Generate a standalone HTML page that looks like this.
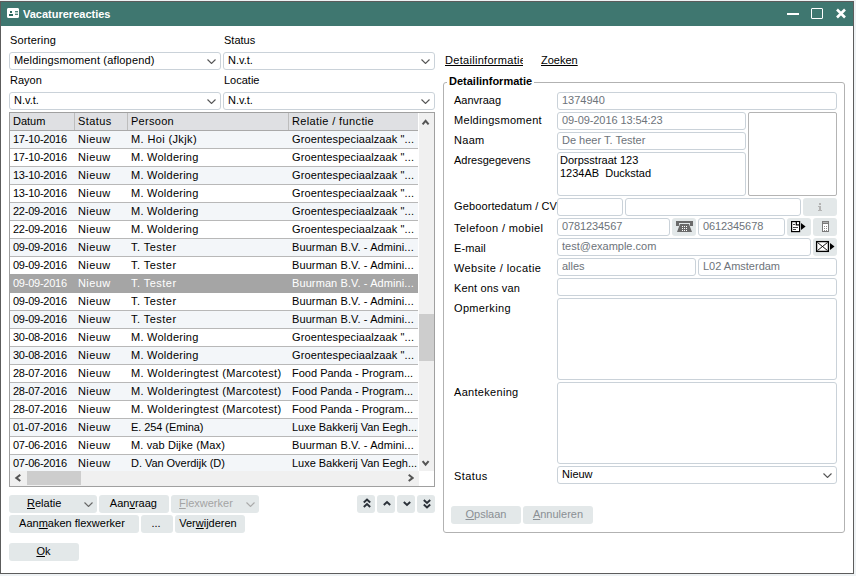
<!DOCTYPE html><html><head><meta charset="utf-8"><style>
*{margin:0;padding:0;box-sizing:border-box}
html,body{width:856px;height:576px;overflow:hidden;background:#eef2f4;font-family:"Liberation Sans",sans-serif;font-size:11px;color:#000}
div{position:absolute}
svg{position:absolute;shape-rendering:geometricPrecision}
.t{white-space:nowrap;line-height:13px;font-size:11px}
.fld{border:1px solid #cad2d9;border-radius:3px;background:#fff}
.btn{background:#e3e8e9;border-radius:3px}
.u{text-decoration:underline}
.lb{letter-spacing:0.3px}
</style></head><body>

<div class="" style="left:0px;top:1px;width:854px;height:573px;border:1px solid #5c5c5c;background:#fff"></div>
<div class="" style="left:1px;top:2px;width:852px;height:24px;background:#3f7770"></div>
<svg style="left:7px;top:8px" width="12" height="10" viewBox="0 0 12 10" shape-rendering="crispEdges">
<rect x="0" y="0" width="12" height="10" fill="#fff"/>
<rect x="0" y="0" width="1" height="1" fill="#a9c4bf"/><rect x="11" y="0" width="1" height="1" fill="#a9c4bf"/>
<rect x="0" y="9" width="1" height="1" fill="#a9c4bf"/><rect x="11" y="9" width="1" height="1" fill="#a9c4bf"/>
<rect x="3" y="3" width="2" height="2" fill="#2f6a60"/>
<rect x="2" y="6" width="4" height="2" fill="#2f6a60"/>
<rect x="8" y="3" width="3" height="1" fill="#4f847c"/>
<rect x="8" y="4" width="3" height="2" fill="#b9d0cb"/>
<rect x="8" y="6" width="3" height="1" fill="#4f847c"/>
</svg>
<div class="t" style="left:23px;top:8px;color:#fff;font-weight:bold">Vacaturereacties</div>
<div class="" style="left:787px;top:13px;width:12px;height:2px;background:#fff"></div>
<div class="" style="left:811px;top:8px;width:12px;height:11px;border:1.5px solid #fff;border-radius:1px"></div>
<svg style="left:835px;top:8px" width="12" height="12" viewBox="0 0 12 12"><path d="M2 1.5 L10 9.5 M10 1.5 L2 9.5" stroke="#fff" stroke-width="2.6"/></svg>
<div class="t" style="left:10px;top:34px;letter-spacing:0.15px">Sortering</div>
<div class="fld" style="left:9px;top:52px;width:212px;height:18px;"><div class="t" style="left:4px;top:1px;color:#000"><span style="letter-spacing:0.17px">Meldingsmoment (aflopend)</span></div></div>
<svg style="position:absolute;left:207px;top:59px" width="9" height="5" viewBox="0 0 9 5"><path d="M0.5 0.5 L4.5 4.5 L8.5 0.5" fill="none" stroke="#555" stroke-width="1.1"/></svg>
<div class="t" style="left:224px;top:34px;">Status</div>
<div class="fld" style="left:223px;top:52px;width:212px;height:18px;"><div class="t" style="left:4px;top:1px;color:#000">N.v.t.</div></div>
<svg style="position:absolute;left:421px;top:59px" width="9" height="5" viewBox="0 0 9 5"><path d="M0.5 0.5 L4.5 4.5 L8.5 0.5" fill="none" stroke="#555" stroke-width="1.1"/></svg>
<div class="t" style="left:10px;top:74px;">Rayon</div>
<div class="fld" style="left:9px;top:92px;width:212px;height:18px;"><div class="t" style="left:4px;top:1px;color:#000">N.v.t.</div></div>
<svg style="position:absolute;left:207px;top:99px" width="9" height="5" viewBox="0 0 9 5"><path d="M0.5 0.5 L4.5 4.5 L8.5 0.5" fill="none" stroke="#555" stroke-width="1.1"/></svg>
<div class="t" style="left:224px;top:74px;">Locatie</div>
<div class="fld" style="left:223px;top:92px;width:212px;height:18px;"><div class="t" style="left:4px;top:1px;color:#000">N.v.t.</div></div>
<svg style="position:absolute;left:421px;top:99px" width="9" height="5" viewBox="0 0 9 5"><path d="M0.5 0.5 L4.5 4.5 L8.5 0.5" fill="none" stroke="#555" stroke-width="1.1"/></svg>
<div class="" style="left:9px;top:112px;width:426px;height:375px;border:1px solid #a0a0a0;background:#fff"></div>
<div class="" style="left:10px;top:113px;width:408px;height:17px;background:#dfe0e3"></div>
<div class="" style="left:10px;top:130px;width:408px;height:1px;background:#a9a9a9"></div>
<div class="" style="left:74px;top:113px;width:1px;height:17px;background:#bdbdbd"></div>
<div class="" style="left:127px;top:113px;width:1px;height:17px;background:#bdbdbd"></div>
<div class="" style="left:288px;top:113px;width:1px;height:17px;background:#bdbdbd"></div>
<div class="t" style="left:13px;top:115px;">Datum</div>
<div class="t" style="left:78px;top:115px;letter-spacing:0.4px">Status</div>
<div class="t" style="left:131px;top:115px;letter-spacing:0.28px">Persoon</div>
<div class="t" style="left:292px;top:115px;letter-spacing:0.37px">Relatie / functie</div>
<div style="left:10px;top:131px;width:408px;height:340px;overflow:hidden"><div style="left:0;top:0px;width:408px;height:17px;background:#f3f6f9;color:#000"><div class="t" style="left:3px;top:2px;letter-spacing:-0.25px">17-10-2016</div><div class="t" style="left:68px;top:2px;letter-spacing:0.4px">Nieuw</div><div class="t" style="left:121px;top:2px;letter-spacing:0.37px">M. Hoi (Jkjk)</div><div class="t" style="left:282px;top:2px;letter-spacing:0.11px">Groentespeciaalzaak "...</div></div><div style="left:0;top:17px;width:408px;height:1px;background:#b8b8b8"></div><div style="left:0;top:18px;width:408px;height:17px;background:#fff;color:#000"><div class="t" style="left:3px;top:2px;letter-spacing:-0.25px">17-10-2016</div><div class="t" style="left:68px;top:2px;letter-spacing:0.4px">Nieuw</div><div class="t" style="left:121px;top:2px;letter-spacing:0.25px">M. Woldering</div><div class="t" style="left:282px;top:2px;letter-spacing:0.11px">Groentespeciaalzaak "...</div></div><div style="left:0;top:35px;width:408px;height:1px;background:#b8b8b8"></div><div style="left:0;top:36px;width:408px;height:17px;background:#f3f6f9;color:#000"><div class="t" style="left:3px;top:2px;letter-spacing:-0.25px">13-10-2016</div><div class="t" style="left:68px;top:2px;letter-spacing:0.4px">Nieuw</div><div class="t" style="left:121px;top:2px;letter-spacing:0.25px">M. Woldering</div><div class="t" style="left:282px;top:2px;letter-spacing:0.11px">Groentespeciaalzaak "...</div></div><div style="left:0;top:53px;width:408px;height:1px;background:#b8b8b8"></div><div style="left:0;top:54px;width:408px;height:17px;background:#fff;color:#000"><div class="t" style="left:3px;top:2px;letter-spacing:-0.25px">13-10-2016</div><div class="t" style="left:68px;top:2px;letter-spacing:0.4px">Nieuw</div><div class="t" style="left:121px;top:2px;letter-spacing:0.25px">M. Woldering</div><div class="t" style="left:282px;top:2px;letter-spacing:0.11px">Groentespeciaalzaak "...</div></div><div style="left:0;top:71px;width:408px;height:1px;background:#b8b8b8"></div><div style="left:0;top:72px;width:408px;height:17px;background:#f3f6f9;color:#000"><div class="t" style="left:3px;top:2px;letter-spacing:-0.25px">22-09-2016</div><div class="t" style="left:68px;top:2px;letter-spacing:0.4px">Nieuw</div><div class="t" style="left:121px;top:2px;letter-spacing:0.25px">M. Woldering</div><div class="t" style="left:282px;top:2px;letter-spacing:0.11px">Groentespeciaalzaak "...</div></div><div style="left:0;top:89px;width:408px;height:1px;background:#b8b8b8"></div><div style="left:0;top:90px;width:408px;height:17px;background:#fff;color:#000"><div class="t" style="left:3px;top:2px;letter-spacing:-0.25px">22-09-2016</div><div class="t" style="left:68px;top:2px;letter-spacing:0.4px">Nieuw</div><div class="t" style="left:121px;top:2px;letter-spacing:0.25px">M. Woldering</div><div class="t" style="left:282px;top:2px;letter-spacing:0.11px">Groentespeciaalzaak "...</div></div><div style="left:0;top:107px;width:408px;height:1px;background:#b8b8b8"></div><div style="left:0;top:108px;width:408px;height:17px;background:#f3f6f9;color:#000"><div class="t" style="left:3px;top:2px;letter-spacing:-0.25px">09-09-2016</div><div class="t" style="left:68px;top:2px;letter-spacing:0.4px">Nieuw</div><div class="t" style="left:121px;top:2px;letter-spacing:0.46px">T. Tester</div><div class="t" style="left:282px;top:2px;letter-spacing:0.1px">Buurman B.V. - Admini...</div></div><div style="left:0;top:125px;width:408px;height:1px;background:#b8b8b8"></div><div style="left:0;top:126px;width:408px;height:17px;background:#fff;color:#000"><div class="t" style="left:3px;top:2px;letter-spacing:-0.25px">09-09-2016</div><div class="t" style="left:68px;top:2px;letter-spacing:0.4px">Nieuw</div><div class="t" style="left:121px;top:2px;letter-spacing:0.46px">T. Tester</div><div class="t" style="left:282px;top:2px;letter-spacing:0.1px">Buurman B.V. - Admini...</div></div><div style="left:0;top:143px;width:408px;height:1px;background:#a5a5a5"></div><div style="left:0;top:144px;width:408px;height:17px;background:#a5a5a5;color:#fff"><div class="t" style="left:3px;top:2px;letter-spacing:-0.25px">09-09-2016</div><div class="t" style="left:68px;top:2px;letter-spacing:0.4px">Nieuw</div><div class="t" style="left:121px;top:2px;letter-spacing:0.46px">T. Tester</div><div class="t" style="left:282px;top:2px;letter-spacing:0.1px">Buurman B.V. - Admini...</div></div><div style="left:0;top:161px;width:408px;height:1px;background:#a5a5a5"></div><div style="left:0;top:162px;width:408px;height:17px;background:#fff;color:#000"><div class="t" style="left:3px;top:2px;letter-spacing:-0.25px">09-09-2016</div><div class="t" style="left:68px;top:2px;letter-spacing:0.4px">Nieuw</div><div class="t" style="left:121px;top:2px;letter-spacing:0.46px">T. Tester</div><div class="t" style="left:282px;top:2px;letter-spacing:0.1px">Buurman B.V. - Admini...</div></div><div style="left:0;top:179px;width:408px;height:1px;background:#b8b8b8"></div><div style="left:0;top:180px;width:408px;height:17px;background:#f3f6f9;color:#000"><div class="t" style="left:3px;top:2px;letter-spacing:-0.25px">09-09-2016</div><div class="t" style="left:68px;top:2px;letter-spacing:0.4px">Nieuw</div><div class="t" style="left:121px;top:2px;letter-spacing:0.46px">T. Tester</div><div class="t" style="left:282px;top:2px;letter-spacing:0.1px">Buurman B.V. - Admini...</div></div><div style="left:0;top:197px;width:408px;height:1px;background:#b8b8b8"></div><div style="left:0;top:198px;width:408px;height:17px;background:#fff;color:#000"><div class="t" style="left:3px;top:2px;letter-spacing:-0.25px">30-08-2016</div><div class="t" style="left:68px;top:2px;letter-spacing:0.4px">Nieuw</div><div class="t" style="left:121px;top:2px;letter-spacing:0.25px">M. Woldering</div><div class="t" style="left:282px;top:2px;letter-spacing:0.11px">Groentespeciaalzaak "...</div></div><div style="left:0;top:215px;width:408px;height:1px;background:#b8b8b8"></div><div style="left:0;top:216px;width:408px;height:17px;background:#f3f6f9;color:#000"><div class="t" style="left:3px;top:2px;letter-spacing:-0.25px">30-08-2016</div><div class="t" style="left:68px;top:2px;letter-spacing:0.4px">Nieuw</div><div class="t" style="left:121px;top:2px;letter-spacing:0.25px">M. Woldering</div><div class="t" style="left:282px;top:2px;letter-spacing:0.11px">Groentespeciaalzaak "...</div></div><div style="left:0;top:233px;width:408px;height:1px;background:#b8b8b8"></div><div style="left:0;top:234px;width:408px;height:17px;background:#fff;color:#000"><div class="t" style="left:3px;top:2px;letter-spacing:-0.25px">28-07-2016</div><div class="t" style="left:68px;top:2px;letter-spacing:0.4px">Nieuw</div><div class="t" style="left:121px;top:2px;letter-spacing:0.34px">M. Wolderingtest (Marcotest)</div><div class="t" style="left:282px;top:2px;letter-spacing:0px">Food Panda - Program...</div></div><div style="left:0;top:251px;width:408px;height:1px;background:#b8b8b8"></div><div style="left:0;top:252px;width:408px;height:17px;background:#f3f6f9;color:#000"><div class="t" style="left:3px;top:2px;letter-spacing:-0.25px">28-07-2016</div><div class="t" style="left:68px;top:2px;letter-spacing:0.4px">Nieuw</div><div class="t" style="left:121px;top:2px;letter-spacing:0.34px">M. Wolderingtest (Marcotest)</div><div class="t" style="left:282px;top:2px;letter-spacing:0px">Food Panda - Program...</div></div><div style="left:0;top:269px;width:408px;height:1px;background:#b8b8b8"></div><div style="left:0;top:270px;width:408px;height:17px;background:#fff;color:#000"><div class="t" style="left:3px;top:2px;letter-spacing:-0.25px">28-07-2016</div><div class="t" style="left:68px;top:2px;letter-spacing:0.4px">Nieuw</div><div class="t" style="left:121px;top:2px;letter-spacing:0.34px">M. Wolderingtest (Marcotest)</div><div class="t" style="left:282px;top:2px;letter-spacing:0px">Food Panda - Program...</div></div><div style="left:0;top:287px;width:408px;height:1px;background:#b8b8b8"></div><div style="left:0;top:288px;width:408px;height:17px;background:#f3f6f9;color:#000"><div class="t" style="left:3px;top:2px;letter-spacing:-0.25px">01-07-2016</div><div class="t" style="left:68px;top:2px;letter-spacing:0.4px">Nieuw</div><div class="t" style="left:121px;top:2px;letter-spacing:-0.07px">E. 254 (Emina)</div><div class="t" style="left:282px;top:2px;letter-spacing:-0.03px">Luxe Bakkerij Van Eegh...</div></div><div style="left:0;top:305px;width:408px;height:1px;background:#b8b8b8"></div><div style="left:0;top:306px;width:408px;height:17px;background:#fff;color:#000"><div class="t" style="left:3px;top:2px;letter-spacing:-0.25px">07-06-2016</div><div class="t" style="left:68px;top:2px;letter-spacing:0.4px">Nieuw</div><div class="t" style="left:121px;top:2px;letter-spacing:0.13px">M. vab Dijke (Max)</div><div class="t" style="left:282px;top:2px;letter-spacing:0.1px">Buurman B.V. - Admini...</div></div><div style="left:0;top:323px;width:408px;height:1px;background:#b8b8b8"></div><div style="left:0;top:324px;width:408px;height:17px;background:#f3f6f9;color:#000"><div class="t" style="left:3px;top:2px;letter-spacing:-0.25px">07-06-2016</div><div class="t" style="left:68px;top:2px;letter-spacing:0.4px">Nieuw</div><div class="t" style="left:121px;top:2px;letter-spacing:-0.04px">D. Van Overdijk (D)</div><div class="t" style="left:282px;top:2px;letter-spacing:-0.03px">Luxe Bakkerij Van Eegh...</div></div><div style="left:0;top:341px;width:408px;height:1px;background:#b8b8b8"></div></div>
<div class="" style="left:419px;top:113px;width:15px;height:358px;background:#f0f0f0"></div>
<div class="" style="left:419px;top:314px;width:15px;height:47px;background:#cdcdcd"></div>
<svg style="left:421px;top:118px" width="10" height="8" viewBox="0 0 10 8"><path d="M1.6 6.3 L4.6 2.8 L7.6 6.3" fill="none" stroke="#555" stroke-width="2"/></svg>
<svg style="left:421px;top:459px" width="10" height="8" viewBox="0 0 10 8"><path d="M1.6 2.1 L4.6 5.6 L7.6 2.1" fill="none" stroke="#555" stroke-width="2"/></svg>
<div class="" style="left:10px;top:471px;width:409px;height:15px;background:#f0f0f0"></div>
<div class="" style="left:27px;top:471px;width:54px;height:14px;background:#cdcdcd"></div>
<svg style="left:14px;top:472.5px" width="8" height="10" viewBox="0 0 8 10"><path d="M6.3 1.8 L2.3 4.9 L6.3 8" fill="none" stroke="#555" stroke-width="2"/></svg>
<svg style="left:406px;top:472.5px" width="8" height="10" viewBox="0 0 8 10"><path d="M2.7 1.8 L6.7 4.9 L2.7 8" fill="none" stroke="#555" stroke-width="2"/></svg>
<div class="btn" style="left:9px;top:495px;width:88px;height:18px;"><div class="t" style="left:18px;top:2px;color:#000"><span class="u">R</span>elatie</div></div>
<svg style="position:absolute;left:84px;top:502px" width="9" height="5" viewBox="0 0 9 5"><path d="M0.5 0.5 L4.5 4.5 L8.5 0.5" fill="none" stroke="#666" stroke-width="1.1"/></svg>
<div class="btn" style="left:99px;top:495px;width:70px;height:18px;"><div class="t" style="left:-0.6px;width:70px;text-align:center;top:2px;color:#000">Aan<span class="u">v</span>raag</div></div>
<div class="btn" style="left:171px;top:495px;width:88px;height:18px;"><div class="t" style="left:8px;top:2px;color:#a4a4a4"><span class="u">F</span>lexwerker</div></div>
<svg style="position:absolute;left:246px;top:502px" width="9" height="5" viewBox="0 0 9 5"><path d="M0.5 0.5 L4.5 4.5 L8.5 0.5" fill="none" stroke="#aaa" stroke-width="1.1"/></svg>
<div class="btn" style="left:357px;top:495px;width:18px;height:18px;"></div>
<svg style="left:362.6px;top:498px" width="8" height="10" viewBox="0 0 8 10"><path d="M0.8 4.5 L4 1.5 L7.2 4.5 M0.8 9 L4 6 L7.2 9" fill="none" stroke="#2a3038" stroke-width="1.9"/></svg>
<div class="btn" style="left:377px;top:495px;width:18px;height:18px;"></div>
<svg style="left:382.6px;top:500px" width="8" height="6" viewBox="0 0 8 6"><path d="M0.8 5 L4 2 L7.2 5" fill="none" stroke="#2a3038" stroke-width="1.9"/></svg>
<div class="btn" style="left:397px;top:495px;width:18px;height:18px;"></div>
<svg style="left:402.6px;top:500.8px" width="8" height="6" viewBox="0 0 8 6"><path d="M0.8 1 L4 4 L7.2 1" fill="none" stroke="#2a3038" stroke-width="1.9"/></svg>
<div class="btn" style="left:417px;top:495px;width:18px;height:18px;"></div>
<svg style="left:422.6px;top:498.6px" width="8" height="10" viewBox="0 0 8 10"><path d="M0.8 1 L4 4 L7.2 1 M0.8 5.5 L4 8.5 L7.2 5.5" fill="none" stroke="#2a3038" stroke-width="1.9"/></svg>
<div class="btn" style="left:9px;top:515px;width:130px;height:18px;"><div class="t" style="left:-2px;width:130px;text-align:center;top:2px;color:#000">Aan<span class="u">m</span>aken flexwerker</div></div>
<div class="btn" style="left:141px;top:515px;width:32px;height:18px;"><div class="t" style="left:-1px;width:32px;text-align:center;top:2px;color:#000">...</div></div>
<div class="btn" style="left:175px;top:515px;width:70px;height:18px;"><div class="t" style="left:-2px;width:70px;text-align:center;top:2px;color:#000">Ver<span class="u">w</span>ijderen</div></div>
<div class="btn" style="left:9px;top:543px;width:70px;height:18px;"><div class="t" style="left:-0.6px;width:70px;text-align:center;top:2px;color:#000"><span class="u">O</span>k</div></div>
<div class="t u lb" style="left:445px;top:54px;width:78px;overflow:hidden">Detailinformatie</div>
<div class="t" style="left:541px;top:54px;"><span class="u">Zoeken</span></div>
<div class="" style="left:443px;top:82px;width:402px;height:451px;border:1px solid #b2b2b2;border-radius:3px"></div>
<div class="t" style="left:447px;top:75px;padding:0 2px;background:#fff;font-weight:bold">Detailinformatie</div>
<div class="t" style="left:454px;top:94px;letter-spacing:0px">Aanvraag</div>
<div class="t" style="left:454px;top:114px;letter-spacing:0.3px">Meldingsmoment</div>
<div class="t" style="left:454px;top:134px;letter-spacing:0.3px">Naam</div>
<div class="t" style="left:454px;top:154px;letter-spacing:0px">Adresgegevens</div>
<div class="t" style="left:454px;top:200px;letter-spacing:0.12px">Geboortedatum / CV</div>
<div class="t" style="left:454px;top:222px;letter-spacing:0.36px">Telefoon / mobiel</div>
<div class="t" style="left:454px;top:242px;letter-spacing:0.1px">E-mail</div>
<div class="t" style="left:454px;top:262px;letter-spacing:0.4px">Website / locatie</div>
<div class="t" style="left:454px;top:282px;letter-spacing:0.15px">Kent ons van</div>
<div class="t" style="left:454px;top:302px;letter-spacing:0.34px">Opmerking</div>
<div class="t" style="left:454px;top:386px;letter-spacing:0.3px">Aantekening</div>
<div class="t" style="left:454px;top:470px;letter-spacing:0.4px">Status</div>
<div class="fld" style="left:557px;top:92px;width:280px;height:18px;"><div class="t" style="left:4px;top:1px;color:#6d737a">1374940</div></div>
<div class="fld" style="left:557px;top:112px;width:189px;height:18px;"><div class="t" style="left:4px;top:1px;color:#6d737a"><span style="letter-spacing:-0.08px">09-09-2016 13:54:23</span></div></div>
<div class="" style="left:748px;top:112px;width:89px;height:84px;border:1px solid #b4b4b4;border-radius:2px"></div>
<div class="fld" style="left:557px;top:132px;width:189px;height:18px;"><div class="t" style="left:4px;top:1px;color:#6d737a">De heer T. Tester</div></div>
<div class="fld" style="left:557px;top:152px;width:189px;height:44px;"><div class="t" style="left:2px;top:1px;color:#000">Dorpsstraat 123<br>1234AB&nbsp; Duckstad</div></div>
<div class="fld" style="left:557px;top:198px;width:66px;height:18px;"></div>
<div class="fld" style="left:625px;top:198px;width:176px;height:18px;"></div>
<div class="btn" style="left:803px;top:198px;width:34px;height:18px;"></div>
<svg style="left:803px;top:198px" width="34" height="18" shape-rendering="crispEdges" fill="#b4b4b4">
<rect x="16" y="5" width="2" height="2"/><rect x="15" y="8" width="3" height="1"/><rect x="16" y="9" width="2" height="3"/><rect x="15" y="12" width="4" height="1"/></svg>
<div class="fld" style="left:557px;top:218px;width:113px;height:18px;"><div class="t" style="left:4px;top:1px;color:#6d737a"><span style="letter-spacing:-0.1px">0781234567</span></div></div>
<div class="btn" style="left:672px;top:218px;width:24px;height:18px;"></div>
<svg style="left:672px;top:218px" width="24" height="18" shape-rendering="crispEdges">
<g fill="#6a6a6a"><rect x="4" y="3" width="17" height="2"/><rect x="4" y="5" width="3" height="3"/><rect x="18" y="5" width="3" height="3"/>
<path d="M8 6 H17 L20 14 H5 Z"/></g>
<g fill="#fff"><rect x="10" y="8" width="1" height="1"/><rect x="12" y="8" width="1" height="1"/><rect x="14" y="8" width="1" height="1"/>
<rect x="10" y="10" width="1" height="1"/><rect x="12" y="10" width="1" height="1"/><rect x="14" y="10" width="1" height="1"/>
<rect x="10" y="12" width="1" height="1"/><rect x="12" y="12" width="1" height="1"/><rect x="14" y="12" width="1" height="1"/></g></svg>
<div class="fld" style="left:698px;top:218px;width:87px;height:18px;"><div class="t" style="left:4px;top:1px;color:#6d737a"><span style="letter-spacing:-0.1px">0612345678</span></div></div>
<div class="btn" style="left:787px;top:218px;width:24px;height:18px;"></div>
<svg style="left:787px;top:218px" width="24" height="18">
<rect x="4.6" y="3.6" width="8" height="10" fill="#fff" stroke="#000" stroke-width="1.2"/>
<path d="M9.3 3.6 V6.8 H12.6" fill="none" stroke="#000" stroke-width="1.2"/>
<circle cx="11" cy="5.2" r="1" fill="#fff"/>
<g shape-rendering="crispEdges" fill="#444"><rect x="6" y="6" width="2" height="1"/><rect x="6" y="9" width="5" height="1"/><rect x="6" y="11" width="3" height="1"/></g>
<path d="M14 4.9 L18.6 8.4 L14 11.9 Z" fill="#000"/></svg>
<div class="btn" style="left:813px;top:218px;width:24px;height:18px;"></div>
<svg style="left:813px;top:218px" width="24" height="18" shape-rendering="crispEdges">
<rect x="9.5" y="3.5" width="6" height="10" fill="#fff" stroke="#7a7a7a" stroke-width="1"/>
<rect x="10" y="4" width="5" height="1" fill="#b0b0b0"/><rect x="10" y="5" width="5" height="1" fill="#7a7a7a"/>
<g fill="#8a8a8a"><rect x="11" y="8" width="1" height="1"/><rect x="13" y="8" width="1" height="1"/><rect x="11" y="10" width="1" height="1"/><rect x="13" y="10" width="1" height="1"/><rect x="11" y="12" width="1" height="1"/><rect x="13" y="12" width="1" height="1"/></g></svg>
<div class="fld" style="left:557px;top:238px;width:254px;height:18px;"><div class="t" style="left:4px;top:1px;color:#6d737a">test@example.com</div></div>
<div class="btn" style="left:813px;top:238px;width:24px;height:18px;"></div>
<svg style="left:813px;top:238px" width="24" height="18">
<rect x="3.6" y="3.6" width="11.8" height="9.8" fill="#fff" stroke="#000" stroke-width="1.3"/>
<path d="M4.5 4.5 L14.5 12.5 M14.5 4.5 L4.5 12.5" stroke="#000" stroke-width="0.9"/>
<path d="M17 5 L21.5 8.5 L17 12 Z" fill="#000"/></svg>
<div class="fld" style="left:557px;top:258px;width:139px;height:18px;"><div class="t" style="left:4px;top:1px;color:#6d737a">alles</div></div>
<div class="fld" style="left:698px;top:258px;width:139px;height:18px;"><div class="t" style="left:4px;top:1px;color:#6d737a">L02 Amsterdam</div></div>
<div class="fld" style="left:557px;top:278px;width:280px;height:18px;"></div>
<div class="fld" style="left:557px;top:298px;width:280px;height:82px;"></div>
<div class="fld" style="left:557px;top:382px;width:280px;height:82px;"></div>
<div class="fld" style="left:557px;top:466px;width:280px;height:18px;"><div class="t" style="left:4px;top:1px">Nieuw</div></div>
<svg style="position:absolute;left:823px;top:473px" width="9" height="5" viewBox="0 0 9 5"><path d="M0.5 0.5 L4.5 4.5 L8.5 0.5" fill="none" stroke="#555" stroke-width="1.1"/></svg>
<div class="btn" style="left:451px;top:506px;width:70px;height:18px;"><div class="t" style="left:0px;width:70px;text-align:center;top:2px;color:#8a8f94"><span class="u">O</span>pslaan</div></div>
<div class="btn" style="left:523px;top:506px;width:70px;height:18px;"><div class="t" style="left:0px;width:70px;text-align:center;top:2px;color:#8a8f94"><span class="u">A</span>nnuleren</div></div>
</body></html>
